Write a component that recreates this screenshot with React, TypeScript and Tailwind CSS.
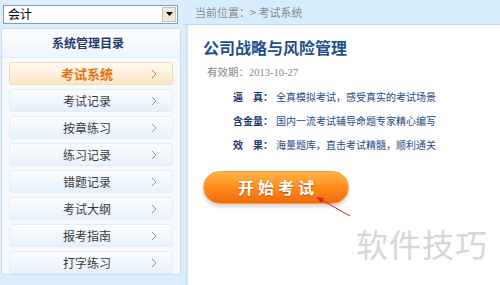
import React from "react";

const menu = ["考试系统", "考试记录", "按章练习", "练习记录", "错题记录", "考试大纲", "报考指南", "打字练习"];

const features = [
  { label: "逼\u3000真", text: "全真模拟考试，感受真实的考试场景" },
  { label: "含金量", text: "国内一流考试辅导命题专家精心编写" },
  { label: "效\u3000果", text: "海量题库，直击考试精髓，顺利通关" },
];

export default function App() {
  return (
    <div
      className="w-[500px] h-[285px] bg-[#dcedfb] flex overflow-hidden"
      style={{ fontFamily: '"Noto Sans CJK SC", "Liberation Sans", sans-serif' }}
    >
      {/* Left column */}
      <div className="w-[183px] flex flex-col pl-[1px] pr-[2px]">
        <div className="h-[28px] flex items-center pl-[2px]">
          <div className="w-[175px] h-[19px] bg-white border border-[#7f9db9] flex items-center justify-between">
            <span className="text-[12px] text-black pl-[4px] leading-none">会计</span>
            <div className="w-[14px] h-[15px] mr-[1px] bg-[#ece9d8] border border-[#c3c3c3] flex items-center justify-center">
              <svg width="7" height="4" viewBox="0 0 7 4">
                <path d="M0 0 H7 L3.5 4 Z" fill="#000" />
              </svg>
            </div>
          </div>
        </div>
        <div className="h-[247px] bg-[#f6fafe] border border-[#c9e0f4] rounded-[2px] flex flex-col">
          <div className="h-[30px] flex items-center justify-center bg-gradient-to-b from-white to-[#eef5fc] border-b border-[#e2eef9]">
            <span className="text-[12px] font-bold text-[#1f3c68] pr-[6px]">系统管理目录</span>
          </div>
          <div className="flex flex-col gap-[4px] px-[7px] pt-[4px]">
            {menu.map((m, i) => (
              <div
                key={m}
                className={`h-[23px] rounded-[3px] border flex items-center relative ${
                  i === 0
                    ? "border-[#f3d9b0] bg-gradient-to-b from-[#fffaf2] to-[#fde7c8]"
                    : "border-[#e3edf7] bg-gradient-to-b from-[#fbfdff] to-[#e6f1fb]"
                }`}
              >
                <span
                  className={`flex-1 text-center pr-[8px] ${
                    i === 0 ? "text-[13px] font-bold text-[#e2730e]" : "text-[12px] text-[#3a3a3a]"
                  }`}
                >
                  {m}
                </span>
                <svg className="absolute right-[15px]" width="6" height="10" viewBox="0 0 6 10">
                  <path
                    d="M1 1 L5 5 L1 9"
                    fill="none"
                    stroke={i === 0 ? "#e2730e" : "#8a98a8"}
                    strokeWidth="1"
                  />
                </svg>
              </div>
            ))}
          </div>
        </div>
      </div>

      {/* Right column */}
      <div className="flex-1 flex flex-col">
        <div className="h-[25px] bg-[#d7ecfc] border-b border-[#bcdcf3] flex items-center pl-[12px]">
          <span className="text-[11px] text-[#8a8a8a]">当前位置：&gt; 考试系统</span>
        </div>
        <div className="flex-1 bg-white border-l-[3px] border-[#cfe6f9] ml-[2px] pl-[15px] pt-[11px] relative">
          <h1 className="text-[16px] font-bold text-[#1d4f94] leading-[22px]">公司战略与风险管理</h1>
          <div className="mt-[6px] pl-[4px] text-[10.5px] text-[#888]">
            有效期：<span style={{ fontFamily: '"Liberation Serif", serif' }}>2013-10-27</span>
          </div>
          <div className="mt-[7px] pl-[30px] flex flex-col gap-[7px]">
            {features.map((f) => (
              <div key={f.label} className="flex items-center text-[10px] leading-[17px]">
                <span className="font-bold text-[#1b3a6a] w-[43px]">{f.label}：</span>
                <span className="text-[#1f4a86]">{f.text}</span>
              </div>
            ))}
          </div>
          <div className="mt-[18px] w-[146px] h-[33px] rounded-full bg-gradient-to-b from-[#ffb545] via-[#ff8a1c] to-[#f26a0a] border border-[#f7a13a] shadow-[0_3px_3px_rgba(0,0,0,0.15)] flex items-center justify-center">
            <span className="text-[16px] font-bold text-white tracking-[4px] pl-[4px] [text-shadow:0_1px_1px_rgba(150,60,0,0.6)]">
              开始考试
            </span>
          </div>
          <svg className="absolute left-[126px] top-[169px]" width="40" height="24" viewBox="0 0 40 24">
            <path d="M36 22 L6 5" stroke="#d3232a" strokeWidth="1" fill="none" />
            <path d="M2 3 L10 4 L7 9 Z" fill="#d3232a" />
          </svg>
          <div className="absolute left-[168px] top-[202px] text-[32px] text-[#d6d6d6] tracking-[1px] leading-none">
            软件技巧
          </div>
        </div>
      </div>
    </div>
  );
}
